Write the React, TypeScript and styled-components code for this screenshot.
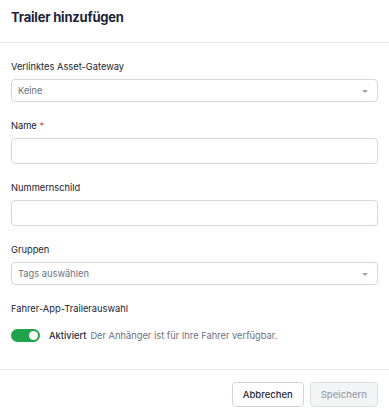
import React, { useState } from 'react';
import styled, { createGlobalStyle } from 'styled-components';

const GlobalStyle = createGlobalStyle`
  body {
    margin: 0;
    background: #ffffff;
    font-family: Inter, "Noto Sans", sans-serif;
  }
  * { box-sizing: border-box; }
`;

const App = () => {
  const [enabled, setEnabled] = useState(true);

  return (
    <>
      <GlobalStyle />
      <Modal>
        <Header>
          <Title>Trailer hinzufügen</Title>
        </Header>
        <Body>
          <Field>
            <Label>Verlinktes Asset-Gateway</Label>
            <Select>
              <Placeholder>Keine</Placeholder>
              <Caret />
            </Select>
          </Field>
          <Field>
            <Label>
              Name <Required>*</Required>
            </Label>
            <Input />
          </Field>
          <Field>
            <Label>Nummernschild</Label>
            <Input />
          </Field>
          <Field>
            <Label>Gruppen</Label>
            <Select>
              <Placeholder>Tags auswählen</Placeholder>
              <Caret />
            </Select>
          </Field>
          <Field>
            <Label>Fahrer-App-Trailerauswahl</Label>
            <ToggleRow>
              <Toggle on={enabled} onClick={() => setEnabled(!enabled)}>
                <Knob on={enabled} />
              </Toggle>
              <ToggleLabel>Aktiviert</ToggleLabel>
              <ToggleHint>Der Anhänger ist für Ihre Fahrer verfügbar.</ToggleHint>
            </ToggleRow>
          </Field>
        </Body>
        <Footer>
          <Button>Abbrechen</Button>
          <Button disabled>Speichern</Button>
        </Footer>
      </Modal>
    </>
  );
};

const Modal = styled.div`
  width: 389px;
  height: 414px;
  display: flex;
  flex-direction: column;
  background: #ffffff;
`;

const Header = styled.div`
  height: 43px;
  padding: 9px 11px 0;
  border-bottom: 1px solid #e5e7eb;
`;

const Title = styled.h1`
  margin: 0;
  font-size: 13px;
  line-height: 17px;
  font-weight: 700;
  color: #1b2537;
  letter-spacing: -0.2px;
`;

const Body = styled.div`
  flex: 1;
  display: flex;
  flex-direction: column;
  gap: 17px;
  padding: 17px 11px 0;
`;

const Field = styled.div`
  display: flex;
  flex-direction: column;
  gap: 5px;
`;

const Label = styled.label`
  font-size: 9.3px;
  line-height: 14px;
  font-weight: 400;
  color: #1a2230;
`;

const Required = styled.span`
  color: #e5484d;
`;

const Select = styled.div`
  height: 23px;
  display: flex;
  align-items: center;
  justify-content: space-between;
  padding: 0 9px 0 6px;
  border: 1px solid #d3d7de;
  border-radius: 4px;
  background: #ffffff;
`;

const Placeholder = styled.span`
  font-size: 9.3px;
  color: #6b7280;
`;

const Caret = styled.span`
  width: 0;
  height: 0;
  margin-top: 2px;
  border-left: 3px solid transparent;
  border-right: 3px solid transparent;
  border-top: 3px solid #9ca3af;
`;

const Input = styled.input`
  height: 26px;
  border: 1px solid #d3d7de;
  border-radius: 4px;
  padding: 0 8px;
  font-family: inherit;
  font-size: 9.3px;
  outline: none;
`;

const ToggleRow = styled.div`
  display: flex;
  align-items: center;
  gap: 4px;
  margin-top: 8px;
  font-size: 9.3px;
`;

const Toggle = styled.button<{ on: boolean }>`
  width: 29px;
  height: 13px;
  padding: 0;
  margin-right: 5px;
  border: none;
  border-radius: 7px;
  background: ${(p) => (p.on ? '#1ea34b' : '#d1d5db')};
  position: relative;
  cursor: pointer;
`;

const Knob = styled.span<{ on: boolean }>`
  position: absolute;
  top: 2px;
  left: ${(p) => (p.on ? '18px' : '2px')};
  width: 9px;
  height: 9px;
  border-radius: 50%;
  background: #ffffff;
`;

const ToggleLabel = styled.span`
  font-weight: 500;
  color: #1f2937;
`;

const ToggleHint = styled.span`
  color: #6b7280;
`;

const Footer = styled.div`
  height: 45px;
  display: flex;
  justify-content: flex-end;
  align-items: flex-start;
  gap: 6px;
  padding: 12px 11px 0;
  border-top: 1px solid #e5e7eb;
`;

const Button = styled.button`
  height: 25px;
  padding: 0 10px;
  border-radius: 4px;
  font-family: inherit;
  font-size: 9.5px;
  font-weight: 500;
  border: 1px solid ${(p) => (p.disabled ? '#dcdfe4' : '#cfd4db')};
  background: ${(p) => (p.disabled ? '#f3f4f6' : '#ffffff')};
  color: ${(p) => (p.disabled ? '#9aa1ab' : '#1f2937')};
  cursor: ${(p) => (p.disabled ? 'default' : 'pointer')};
`;

export default App;
